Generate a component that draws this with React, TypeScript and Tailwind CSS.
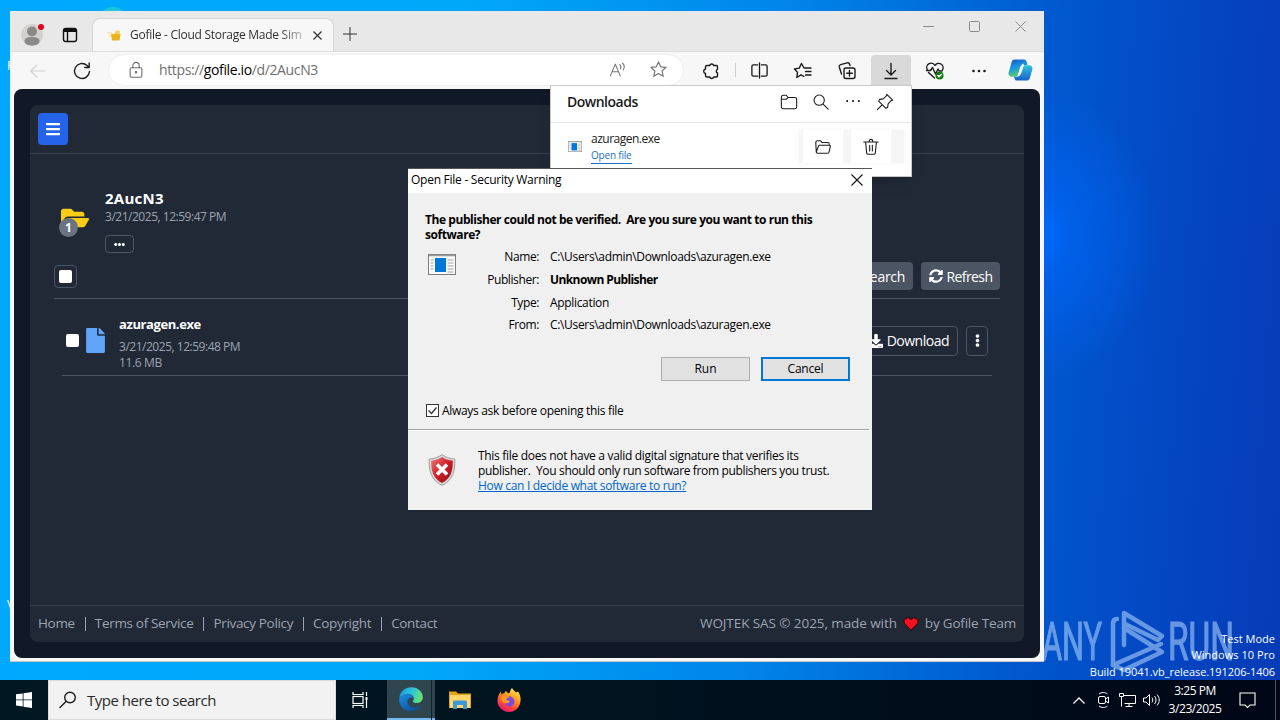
import type { ReactNode } from "react";
import { FaBars, FaFolderOpen, FaFile, FaEllipsisH, FaEllipsisV, FaSyncAlt, FaDownload, FaSearch } from "react-icons/fa";

interface IconProps {
  size?: number;
  stroke?: string;
  width?: number;
  className?: string;
  children: ReactNode;
}

function Icon({ size = 20, stroke = "#1b1b1b", width = 1.2, className = "", children }: IconProps) {
  return (
    <svg
      width={size}
      height={size}
      viewBox="0 0 20 20"
      fill="none"
      stroke={stroke}
      strokeWidth={width}
      strokeLinecap="round"
      strokeLinejoin="round"
      className={`shrink-0 ${className}`}
    >
      {children}
    </svg>
  );
}

function ExeIcon({ className }: { className: string }) {
  return (
    <svg viewBox="0 0 28 21" className={className} preserveAspectRatio="none">
      <rect x="0.5" y="0.5" width="27" height="20" fill="#fafafa" stroke="#7d7d7d" />
      <path d="M1 1.5h26" stroke="#9a9a9a" strokeWidth="1.5" />
      <path d="M2.5 6h3M2.5 9h3M2.5 12h3M2.5 15h3M19.5 6h6M19.5 9h6M19.5 12h6M19.5 15h6M19.5 18h6" stroke="#a3a3a3" />
      <rect x="7" y="4" width="11" height="14" fill="#0078d7" />
    </svg>
  );
}

function TabStrip() {
  return (
    <div className="flex h-[40px] shrink-0 bg-[#e8e8e8]">
      <div className="flex w-[82px] items-center pt-2 pl-[11px]">
        <svg width="26" height="26" viewBox="0 0 26 26" className="shrink-0">
          <circle cx="11" cy="13" r="11" fill="#d4d2d0" />
          <circle cx="11" cy="9.5" r="5" fill="#8c8a88" />
          <path d="M3.5 19c0-3 3-4 7.5-4s7.5 1 7.5 4-3.5 4.5-7.5 4.5-7.5-1.5-7.5-4.5z" fill="#8c8a88" />
          <circle cx="20" cy="5" r="3" fill="#e3001b" />
        </svg>
        <svg width="16" height="16" viewBox="0 0 16 16" fill="none" stroke="#111" strokeWidth="1.4" className="ml-[15px] shrink-0">
          <rect x="1.5" y="1.5" width="13" height="13" rx="2.2" />
          <path d="M1.5 3.5h13" strokeWidth="3" />
          <path d="M5.5 5v9" />
        </svg>
      </div>
      <div className="mt-[7px] flex w-[242px] items-center rounded-t-lg border border-b-0 border-[#d4d4d4] bg-[#f7f7f7] pl-[14px]">
        <svg width="16" height="14" viewBox="0 0 16 14" className="shrink-0">
          <path d="M0 5h5M1.5 8h3" stroke="#f3d98b" strokeWidth="1.2" />
          <path d="M4 6h9.500l-1 6.500H5z" fill="#e9b21f" />
          <path d="M7 6l2-3.500 4 .5-.5 3z" fill="#f7cf5a" />
        </svg>
        <span className="ml-[7px] w-[174px] overflow-hidden bg-linear-to-r from-[#2b2b2b] from-85% to-[#c8c8c8] bg-clip-text text-[12px] tracking-[-0.27px] whitespace-nowrap text-transparent">
          Gofile - Cloud Storage Made Sim
        </span>
        <svg width="9" height="9" viewBox="0 0 9 9" stroke="#333" strokeWidth="1.2" className="ml-[9px] shrink-0">
          <path d="M0.5 0.5l8 8M8.5 0.5l-8 8" />
        </svg>
      </div>
      <svg width="14" height="14" viewBox="0 0 14 14" stroke="#333" className="mt-[16px] ml-[9px] shrink-0">
        <path d="M7 0v14M0 7h14" />
      </svg>
      <div className="ml-auto flex gap-[35px] pt-[10px] pr-[18px]">
        <svg width="11" height="11" viewBox="0 0 11 11" stroke="#8b8b8b">
          <path d="M0 5.5h11" />
        </svg>
        <svg width="11" height="11" viewBox="0 0 11 11" stroke="#8b8b8b" fill="none">
          <rect x="0.5" y="0.5" width="10" height="10" rx="1" />
        </svg>
        <svg width="11" height="11" viewBox="0 0 11 11" stroke="#8b8b8b">
          <path d="M0.5 0.5l10 10M10.5 0.5l-10 10" />
        </svg>
      </div>
    </div>
  );
}

function Slot({ children }: { children: ReactNode }) {
  return <div className="flex w-[44px] shrink-0 items-center justify-center">{children}</div>;
}

function Toolbar() {
  return (
    <div className="flex h-[38px] shrink-0 border-t border-[#dedede] bg-[#f7f7f7] pl-[6px]">
      <Slot>
        <Icon size={18} stroke="#cfcfcf">
          <path d="M18 10H2M9 3L2 10l7 7" />
        </Icon>
      </Slot>
      <Slot>
        <Icon width={1.4}>
          <path d="M17.5 10.5A7.5 7.5 0 1 1 14.8 4.2L17 6.300M17.200 2v4.500h-4.500" />
        </Icon>
      </Slot>
      <div className="mt-[2px] ml-[4px] flex h-[32px] w-[576px] shrink-0 items-center rounded-full border border-[#f0f0f0] bg-white pb-px pl-[18px]">
        <Icon size={18} stroke="#6b6b6b">
          <rect x="3.500" y="7.500" width="13" height="10.500" rx="1.500" />
          <path d="M6.500 7.500V5a3.500 3.500 0 0 1 7 0v2.500" />
          <circle cx="10" cy="12.500" r="0.800" fill="#6b6b6b" />
        </Icon>
        <span className="ml-[14px] text-[14px] tracking-[-0.370px] text-[#6e6e6e]">
          https://<span className="text-black">gofile.io</span>/d/2AucN3
        </span>
        <Icon size={18} stroke="#767676" className="ml-auto">
          <path d="M1.500 16.500L7 3.500l5.500 13M3.500 12h7M12 4c1.500 1.200 1.500 3 .8 4.500M15 2.500c2.300 2 2.300 5 .8 7.500" />
        </Icon>
        <Icon size={19} stroke="#767676" className="mr-[15px] ml-[22px]">
          <path d="M10 2l2.400 5.200 5.600.6-4.200 3.800 1.200 5.600-5-2.900-5 2.900 1.200-5.600L2 7.800l5.600-.6z" />
        </Icon>
      </div>
      <div className="ml-[5px] flex">
        <Slot>
          <Icon width={1.4}>
            <path d="M6 4.500h2.800a2 2 0 0 1 3.900 0H15.500a1 1 0 0 1 1 1v2.800a2 2 0 0 0 0 3.700v3a1 1 0 0 1-1 1h-2.800a2 2 0 0 1-3.900 0H6a1.500 1.500 0 0 1-1.500-1.500v-2a2.300 2.300 0 0 1 0-4.500V6A1.500 1.500 0 0 1 6 4.500z" />
          </Icon>
        </Slot>
        <div className="mt-[11px] ml-[2px] h-[14px] w-px shrink-0 bg-[#cfcfcf]" />
        <div className="ml-px flex">
          <Slot>
            <Icon width={1.4} size={19}>
              <path d="M8 4H3.500A1.500 1.500 0 0 0 2 5.500v9A1.500 1.500 0 0 0 3.500 16H8M12 4h4.500A1.500 1.500 0 0 1 18 5.500v9a1.500 1.500 0 0 1-1.500 1.500H12M10 2v16" />
            </Icon>
          </Slot>
          <Slot>
            <Icon width={1.4}>
              <path d="M11 15.500L8 13.800l-4.200 2.700.7-5.100L1.500 8l4.700-.9L8.500 2.500 11 7h7M12.500 10.500h5.500M12.500 14h5.500" />
            </Icon>
          </Slot>
          <Slot>
            <Icon width={1.4}>
              <rect x="7" y="7" width="11" height="10.500" rx="2" />
              <path d="M12.500 9.500v5.500M9.800 12.300h5.500M4.500 13L2.300 6a2 2 0 0 1 1.300-2.300l6.500-1.900a2 2 0 0 1 2.400 1.200l.5 1.500" />
            </Icon>
          </Slot>
          <div className="ml-[2px] flex h-[31px] w-[40px] shrink-0 translate-y-[3px] items-center justify-center rounded-t bg-[#d9d9d9]">
            <Icon width={1.4}>
              <path d="M10 2.500v11M5.500 9.500L10 14l4.500-4.500M4 17.500h12" />
            </Icon>
          </div>
          <div className="ml-[2px] flex">
            <Slot>
              <Icon width={1.4}>
                <path d="M9.500 17L3.500 11.500M2.200 8.500A4.200 4.200 0 0 1 10 4.500a4.200 4.200 0 0 1 7.500 4.500M1.500 9.500h4l2-3 3 6.500 2.500-5 1.200 2H17" />
                <circle cx="14.500" cy="14.500" r="4" fill="#0f7b0f" stroke="none" />
                <path d="M12.800 14.500l1.300 1.300 2.200-2.300" stroke="#fff" />
              </Icon>
            </Slot>
            <Slot>
              <Icon>
                <path d="M4.500 10h.01M10 10h.01M15.500 10h.01" strokeWidth="2.600" />
              </Icon>
            </Slot>
          </div>
        </div>
        <svg width="25" height="24" viewBox="0 0 26 24" className="mt-[6px] ml-[7px] shrink-0">
          <defs>
            <linearGradient id="copLeft" x1="0" y1="0" x2="0.3" y2="1">
              <stop offset="0" stopColor="#1556c9" />
              <stop offset="0.55" stopColor="#1d9be0" />
              <stop offset="1" stopColor="#53cf6a" />
            </linearGradient>
            <linearGradient id="copRight" x1="0.5" y1="0" x2="0.5" y2="1">
              <stop offset="0" stopColor="#35c5dc" />
              <stop offset="1" stopColor="#1a5fd0" />
            </linearGradient>
          </defs>
          <path d="M7 1h9.500c2 0 2.500 1.500 3 3l.8 3H16c-2 0-3 1-3.600 3l-2 7c-.5 1.500-1.500 2-3 2H4c-2.500 0-4-2-3.300-4.500l3-10.500C4.200 2 5 1 7 1z" fill="url(#copLeft)" />
          <path d="M19 23H9.500c-2 0-2.600-1.500-3-3l-.3-1H9c2 0 3-1 3.600-3l2-7c.5-1.500 1.500-2 3-2H22c2.500 0 4 2 3.300 4.500l-2.500 8.500C22.300 22 21 23 19 23z" fill="url(#copRight)" />
          <path d="M10.500 17c1.800-.5 2.200-2 2.700-4l1.200-4c.4-1.300 1-2 2-2.500" stroke="#f3fdff" strokeWidth="2.600" fill="none" />
        </svg>
      </div>
    </div>
  );
}

const footerLinks = ["Home", "Terms of Service", "Privacy Policy", "Copyright", "Contact"];

function GofilePage() {
  return (
    <div className="mx-[4px] mb-[3px] flex flex-1 flex-col rounded-lg bg-[#111827] p-4">
      <div className="flex flex-1 flex-col rounded-lg bg-[#212937] text-[#9ca3af]">
        <header className="h-[49px] shrink-0 border-b border-[#374151] pt-2 pl-2">
          <div className="flex h-8 w-[30px] items-center justify-center rounded bg-[#2563eb] text-white">
            <FaBars size={16} />
          </div>
        </header>

        <main className="flex-1 pr-6 pl-6">
          <div className="flex pt-[34px]">
            <div className="relative ml-[7px] h-[54px] w-[44px] pt-[16px]">
              <FaFolderOpen size={28} className="text-[#facc15]" />
              <span className="absolute top-[30px] left-[-2px] flex size-[19px] items-center justify-center rounded-full bg-[#6b7280] text-[12px] font-bold text-white">
                1
              </span>
            </div>
            <div>
              <h1 className="text-[15px] leading-5 font-bold tracking-[0.25px] text-white">2AucN3</h1>
              <p className="text-[12px] leading-[18px] tracking-[-0.480px]">3/21/2025, 12:59:47 PM</p>
              <div className="mt-[9px] flex h-[18px] w-[29px] items-center justify-center rounded border border-[#4b5563] text-white">
                <FaEllipsisH size={11} />
              </div>
            </div>
          </div>

          <div className="mt-[9px] flex h-[37px] border-b border-[#4b5563]">
            <div className="mt-[3px] flex size-[23px] items-center justify-center rounded border border-[#4b5563]">
              <div className="size-[13px] rounded-[2px] bg-white" />
            </div>
            <div className="ml-auto flex h-7 gap-2 text-[14px] text-white">
              <div className="flex items-center gap-1 rounded bg-[#4b5563] px-2">
                <FaSearch size={14} />
                <span className="tracking-[-0.300px]">Search</span>
              </div>
              <div className="flex w-[79px] items-center justify-center gap-1 rounded bg-[#4b5563]">
                <FaSyncAlt size={14} className="shrink-0" />
                <span className="tracking-[-0.600px]">Refresh</span>
              </div>
            </div>
          </div>

          <div className="mx-2 flex h-[77px] items-center border-b border-[#4b5563] pt-[7px]">
            <div className="ml-1 size-[13px] rounded-[2px] bg-white" />
            <FaFile size={25} className="ml-[4px] text-[#60a5fa]" />
            <div className="ml-[11px]">
              <p className="-mt-px text-[13px] leading-5 font-bold tracking-[-0.400px] text-white">azuragen.exe</p>
              <p className="pt-[5px] text-[12px] leading-4 tracking-[-0.480px]">3/21/2025, 12:59:48 PM</p>
              <p className="-mb-[4px] text-[12px] leading-4 tracking-[-0.350px]">11.6 MB</p>
            </div>
            <div className="ml-auto flex h-[30px] gap-2 pr-1 text-[14px] text-white">
              <div className="flex items-center gap-1 rounded border border-[#4b5563] px-2">
                <FaDownload size={14} />
                <span className="tracking-[-0.500px]">Download</span>
              </div>
              <div className="flex w-[22px] items-center justify-center rounded border border-[#4b5563]">
                <FaEllipsisV size={13} />
              </div>
            </div>
          </div>
        </main>

        <footer className="flex h-[37px] shrink-0 items-center justify-between border-t border-[#374151] px-2 pb-px text-[13.5px]">
          <div className="flex items-center">
            {footerLinks.map((link, i) => (
              <div key={link} className="flex items-center">
                {i > 0 && <span className="mr-[9px] ml-[10px] h-[14px] w-px bg-[#9ca3af]" />}
                <span className="tracking-[-0.330px] whitespace-nowrap">{link}</span>
              </div>
            ))}
          </div>
          <div className="flex items-center gap-[6px] whitespace-nowrap">
            <span className="tracking-[-0.080px]">WOJTEK SAS © 2025, made with</span>
            <svg width="16" height="14" viewBox="0 0 16 14">
              <path d="M8 13.200L1.600 6.800A3.600 3.600 0 0 1 8 2.600a3.600 3.600 0 0 1 6.400 4.200z" fill="#f1121f" stroke="#300" />
            </svg>
            <span className="tracking-[-0.200px]">by Gofile Team</span>
          </div>
        </footer>
      </div>
    </div>
  );
}

function DownloadsPanel() {
  return (
    <div className="absolute top-[85px] left-[550px] h-[92px] w-[362px] border border-[#c9c9c9] bg-white shadow-lg">
      <div className="flex h-[37px] items-center border-b border-[#e5e5e5] pr-[17px] pl-[16px]">
        <span className="pb-[5px] text-[14px] font-semibold tracking-[-0.500px] text-[#1b1b1b]">Downloads</span>
        <div className="ml-auto flex gap-[14px] pb-[5px]">
          <Icon size={18}>
            <path d="M1.500 15.500v-11a2 2 0 0 1 2-2H7l2 2.500h7.500a2 2 0 0 1 2 2v8.500a2 2 0 0 1-2 2h-13a2 2 0 0 1-2-2zM1.500 7H7l2-2" />
          </Icon>
          <Icon size={18}>
            <circle cx="8" cy="8" r="5.700" />
            <path d="M12.300 12.300L18 18" />
          </Icon>
          <Icon size={18}>
            <path d="M3.500 9h.01M10 9h.01M16.500 9h.01" strokeWidth="2.300" />
          </Icon>
          <Icon size={18}>
            <path d="M12 1.500L18.500 8l-2 .7-3 3.300-.6 4-1.900 1L3 9l1-1.900 4-.6 3.300-3zM6.500 13.500L1.500 18.500" />
          </Icon>
        </div>
      </div>
      <div className="flex pl-[17px]">
        <ExeIcon className="mt-[18px] h-[11px] w-[14px]" />
        <div className="ml-[9px] pt-[8px]">
          <p className="text-[12px] leading-4 tracking-[-0.500px] text-[#1b1b1b]">azuragen.exe</p>
          <span className="block w-[41px] border-b border-[#1a6fc4] pt-px text-[10px] leading-[15px] tracking-[-0.200px] whitespace-nowrap text-[#1a6fc4]">Open file</span>
        </div>
        <div className="mt-[7px] mr-[7px] ml-auto flex h-[33px] gap-[8px] bg-[#f5f5f5] pr-[13px] pl-[4px] shadow-[0_0_6px_#f5f5f5]">
          <div className="flex w-[40px] items-center justify-center bg-white">
            <Icon size={18}>
              <path d="M2.500 15.500L2 5a2 2 0 0 1 2-2h3l2 2h6a2 2 0 0 1 2 2v1M2.500 15.500L5 9a1.500 1.500 0 0 1 1.500-1h10.700a1 1 0 0 1 1 1.300L16.600 16a1.500 1.500 0 0 1-1.500 1H4a1.600 1.600 0 0 1-1.500-1.500z" />
            </Icon>
          </div>
          <div className="flex w-[40px] items-center justify-center bg-white">
            <Icon size={18}>
              <path d="M2 4.500h16M8 4.500V3.500a2 2 0 0 1 4 0v1M4 4.500l1.200 12.300A1.500 1.500 0 0 0 6.700 18h6.600a1.500 1.500 0 0 0 1.500-1.200L16 4.500M8.500 8v6.500M11.500 8v6.500" />
            </Icon>
          </div>
        </div>
      </div>
    </div>
  );
}

const fileInfo = [
  { label: "Name:", value: "C:\\Users\\admin\\Downloads\\azuragen.exe" },
  { label: "Publisher:", value: "Unknown Publisher", bold: true },
  { label: "Type:", value: "Application" },
  { label: "From:", value: "C:\\Users\\admin\\Downloads\\azuragen.exe" },
];

function SecurityDialog() {
  return (
    <div className="absolute top-[168px] left-[408px] flex h-[342px] w-[464px] flex-col bg-[#f0f0f0] text-[12px] text-black">
      <div className="flex h-[25px] shrink-0 items-center justify-between border-t border-[#555] bg-white pr-[9px] pb-[2px] pl-[3px]">
        <span className="tracking-[-0.260px]">Open File - Security Warning</span>
        <svg width="12" height="12" viewBox="0 0 12 12" stroke="#111" strokeWidth="1.1">
          <path d="M0.5 0.5l11 11M11.5 0.5l-11 11" />
        </svg>
      </div>
      <p className="mt-[19px] pl-[17px] leading-[15px] font-bold tracking-[-0.440px] whitespace-pre">
        {"The publisher could not be verified.  Are you sure you want to run this\nsoftware?"}
      </p>
      <div className="mt-[4px] flex">
        <ExeIcon className="mt-[8px] ml-[20px] h-[21px] w-[28px]" />
        <div>
          {fileInfo.map((row) => (
            <div key={row.label} className="flex h-[22.660px] items-center">
              <span className="w-[83px] text-right tracking-[-0.400px]">{row.label}</span>
              <span className={`ml-[11px] ${row.bold ? "font-bold tracking-[-0.600px]" : "tracking-[-0.330px]"}`}>{row.value}</span>
            </div>
          ))}
        </div>
      </div>
      <div className="mt-[20px] flex h-[24px] justify-end gap-[11px] pr-[22px]">
        <button className="w-[89px] border border-[#adadad] bg-[#e1e1e1]">Run</button>
        <button className="w-[89px] border-2 border-[#0078d7] bg-[#e1e1e1] tracking-[-0.200px]">Cancel</button>
      </div>
      <div className="mt-[21px] flex h-[18px] items-center pl-[18px]">
        <svg width="13" height="13" viewBox="0 0 13 13" fill="none" stroke="#333">
          <rect x="0.5" y="0.5" width="12" height="12" fill="#fff" />
          <path d="M2.5 6.5l3 3 5-6" strokeWidth="1.3" />
        </svg>
        <span className="ml-[3px] tracking-[-0.310px]">Always ask before opening this file</span>
      </div>
      <div className="mt-[9px] mr-[3px] h-[2px] border-t border-[#a0a0a0] bg-white" />
      <div className="flex pt-[17px] pl-[20px]">
        <svg width="28" height="32" viewBox="0 0 28 32" className="mt-[6px] shrink-0">
          <defs>
            <linearGradient id="shield" x1="0" y1="0" x2="1" y2="1">
              <stop offset="0" stopColor="#f0797b" />
              <stop offset="0.5" stopColor="#cf1c25" />
              <stop offset="1" stopColor="#8f0d14" />
            </linearGradient>
          </defs>
          <path d="M14 .7c3.500 2.600 7.500 4 12.800 4.300.5 11-1.800 21.500-12.800 26.300C3 26.500.7 16 1.200 5 6.500 4.700 10.500 3.300 14 .7z" fill="#d9d9d9" stroke="#8b8b8b" strokeWidth="0.8" />
          <path d="M14 3c3.200 2.200 6.500 3.400 10.800 3.800.2 9.700-2 18-10.800 22.200C5.200 24.800 3 16.500 3.200 6.800 7.500 6.400 10.800 5.200 14 3z" fill="url(#shield)" />
          <path d="M9 10.500l10 10M19 10.500l-10 10" stroke="#fff" strokeWidth="3.6" />
        </svg>
        <div className="ml-[22px] leading-[15px] whitespace-pre">
          <p className="tracking-[-0.310px]">This file does not have a valid digital signature that verifies its</p>
          <p className="tracking-[-0.350px]">{"publisher.  You should only run software from publishers you trust."}</p>
          <p className="tracking-[-0.310px] text-[#0066cc] underline">How can I decide what software to run?</p>
        </div>
      </div>
    </div>
  );
}

function Watermark() {
  return (
    <svg width="240" height="74" viewBox="0 0 240 74" className="absolute right-0 bottom-0" fill="#9cc3f5" opacity="0.65">
      <g stroke="#9cc3f5" strokeWidth="1.2" fontFamily="Roboto" fontSize="53">
        <text x="2" y="54" textLength="60" lengthAdjust="spacingAndGlyphs">ANY</text>
        <text x="128" y="54" textLength="66" lengthAdjust="spacingAndGlyphs">RUN</text>
      </g>
      <g fill="none" stroke="#9cc3f5" strokeWidth="4.5" strokeLinejoin="round" strokeLinecap="round">
        <path d="M77 13q-4 0-4 5v41L121 38" />
        <path d="M84 39V7L122 30 118 34 85 18" />
        <path d="M84 22L122 46 84 64 73 59" />
      </g>
    </svg>
  );
}

function Taskbar() {
  return (
    <div className="flex h-[40px] bg-linear-to-r from-[#001822] via-[#00131f] to-[#000716] text-white">
      <div className="flex w-[48px] items-center justify-center">
        <svg width="16" height="16" viewBox="0 0 16 16" fill="#fff">
          <path d="M0 2.300l6.700-.9v6.100H0zM7.500 1.300L16 0v7.500H7.500zM0 8.300h6.700v6.100L0 13.500zM7.500 8.300H16V16l-8.500-1.300z" />
        </svg>
      </div>
      <div className="flex w-[288px] items-center border border-[#dcdcdc] bg-[#f2f2f2] pl-[9px] text-[#2a2a2a]">
        <Icon size={20} width={1.4}>
          <circle cx="12" cy="7.500" r="5.300" />
          <path d="M8 11.500L2 17.500" />
        </Icon>
        <span className="ml-[9px] text-[15px] tracking-[-0.480px]">Type here to search</span>
      </div>
      <div className="flex w-[51px] items-center justify-center pr-[3px]">
        <svg width="16" height="16" viewBox="0 0 16 16" fill="none" stroke="#fff" strokeWidth="1.2">
          <path d="M1 0v2.500h10V0M1 16v-2.500h10V16" />
          <rect x="1" y="4.500" width="10" height="7" />
          <path d="M14.500 0v4M14.500 8v8" />
          <rect x="13.500" y="5" width="2" height="3" fill="#fff" stroke="none" />
        </svg>
      </div>
      <div className="relative flex w-[48px] items-center justify-center border-b-2 border-[#76b9ed] bg-[#30464f]">
        <svg width="24" height="24" viewBox="0 0 24 24">
          <defs>
            <linearGradient id="edgeTop" x1="0" y1="0.3" x2="1" y2="0.5">
              <stop offset="0" stopColor="#1a9de0" />
              <stop offset="0.55" stopColor="#2fc7d8" />
              <stop offset="1" stopColor="#6be36b" />
            </linearGradient>
            <linearGradient id="edgeBody" x1="0" y1="0" x2="0.8" y2="1">
              <stop offset="0" stopColor="#1b8fe0" />
              <stop offset="1" stopColor="#0c4f9e" />
            </linearGradient>
          </defs>
          <path d="M.3 11C1 4.500 6 .2 12.300.2 19 .2 23.800 4.800 23.800 10c0 4-3 6-6 6-2.500 0-4-.8-4-1.800 0-.7 1-1 1-2.700 0-2.200-2-4.300-5.300-4.300C5 7.200 1.500 9 .3 11z" fill="url(#edgeTop)" />
          <path d="M.2 12.500C.6 9 4.500 7.200 8.500 7.200c3 0 5.500 1.500 6 3.500-4.500-1.200-7 2-6 5.500 1 3.300 4.500 5 8.500 4.500 2-.3 3.800-1.300 4.700-1.500C19.500 22 16 24 12 24 5 24-.2 18.500.2 12.500z" fill="url(#edgeBody)" />
        </svg>
        <div className="absolute top-0 right-[3px] h-[40px] w-px bg-[#0a2530]" />
      </div>
      <div className="flex w-[49px] items-center justify-center">
        <svg width="22" height="20" viewBox="0 0 22 20">
          <path d="M0 1.500h7l2 2h13V18H0z" fill="#e8a317" />
          <path d="M1 5h20v13H1z" fill="#ffd869" />
          <path d="M4 19v-7a1.500 1.500 0 0 1 1.500-1.500h11A1.500 1.500 0 0 1 18 12v7h-4v-4H8v4z" fill="#3d9ad6" />
        </svg>
      </div>
      <div className="flex w-[49px] items-center justify-center">
        <svg width="24" height="24" viewBox="0 0 24 24">
          <defs>
            <linearGradient id="fox" x1="0.8" y1="0" x2="0.3" y2="1">
              <stop offset="0" stopColor="#fff14f" />
              <stop offset="0.4" stopColor="#ff9a1f" />
              <stop offset="0.75" stopColor="#ff4040" />
              <stop offset="1" stopColor="#e3127c" />
            </linearGradient>
          </defs>
          <path d="M15 0c1 2 3 3 4 4.500l2-1c2 3 3 6 2.500 9.500C23 19.500 18 24 12 24S.5 19 .5 13c0-3.500 1-7 3.500-9.500l.5 3c1-1 2-1.500 3-1.500L9 2.500c.5 2 2 2.500 3 3 1.500-1.500 1-4 3-5.500z" fill="url(#fox)" />
          <circle cx="12.500" cy="13.500" r="5" fill="#7a4be0" />
          <path d="M4.500 9c3-2 6-1 8 .5-2 0-3.500 1-3.500 2.500 1.500-.5 2.500 1 4 1-1 2.500-4 3-6.500 1.500-1.500-1-2.500-3-2-5.500z" fill="#ff9a1f" />
        </svg>
      </div>
      <div className="ml-auto flex items-center">
        <svg width="12" height="7" viewBox="0 0 12 7" fill="none" stroke="#fff" strokeWidth="1.3">
          <path d="M0.5 6.5L6 1l5.500 5.500" />
        </svg>
        <svg width="14" height="18" viewBox="0 0 14 18" fill="none" stroke="#fff" className="ml-[12px]">
          <rect x="1.500" y="5.500" width="7" height="7" rx="1.500" />
          <path d="M8.500 8l3-2v6l-3-2M2 3c2.500-2 6-2 8.500 0M2 15c2.500 2 6 2 8.500 0" />
        </svg>
        <svg width="17" height="14" viewBox="0 0 17 14" fill="none" stroke="#fff" className="ml-[8px]">
          <path d="M5 2.500h11.500v8H5.500M10 10.500v3M6.500 13.500h7M2.500 4v9.500M.5.500h4v3h-4z" />
        </svg>
        <svg width="18" height="14" viewBox="0 0 18 14" fill="none" stroke="#fff" className="ml-[7px]">
          <path d="M0.500 5h2.500l3.500-3.500v11L3 9H.5zM9 4.500c1 1.500 1 3.500 0 5M11.500 3c2 2.500 2 5.500 0 8M14 1.500c3 3.500 3 7.500 0 11" />
        </svg>
        <div className="w-[68px] text-center text-[12px] leading-[18px] tracking-[-0.450px]">
          <p>3:25 PM</p>
          <p>3/23/2025</p>
        </div>
        <svg width="17" height="17" viewBox="0 0 17 17" fill="none" stroke="#fff" strokeWidth="1.1" className="ml-[10px]">
          <path d="M1 1h15v12h-5l-2.500 2.500L6 13H1z" />
        </svg>
        <div className="mr-[4px] ml-[19px] h-[40px] w-px bg-[#4a5566]" />
      </div>
    </div>
  );
}

export default function App() {
  return (
    <div className="flex h-[720px] w-[1280px] flex-col overflow-hidden font-['Open_Sans',sans-serif]">
      <div className="relative h-[680px] overflow-hidden bg-[radial-gradient(ellipse_130px_150px_at_1030px_235px,#006eff_0%,#0062f0cc_30%,transparent_100%),linear-gradient(94deg,#00a8ff_0%,#00a8fa_35%,#0084e8_60%,#0058ce_80%,#0446c2_91%,#063bb6_100%)]">
        <div className="absolute top-[7px] left-[97px] size-[32px] rounded-full bg-[#1cc4dc]" />
        <p className="absolute top-[57px] left-[7px] text-[12px] text-white">F</p>
        <p className="absolute top-[596px] left-[7px] text-[12px] text-white">V</p>
        <Watermark />
        <div className="absolute right-[5px] bottom-0 text-right text-[11px] leading-[17px] text-white">
          <p className="tracking-[0.020px]">Test Mode</p>
          <p className="-mt-px tracking-[0.050px]">Windows 10 Pro</p>
          <p className="tracking-[-0.050px]">Build 19041.vb_release.191206-1406</p>
        </div>
        <div className="absolute top-[11px] left-[10px] flex h-[651px] w-[1034px] flex-col border-b border-[#c5c5c5] bg-[#f7f7f7]">
          <TabStrip />
          <Toolbar />
          <GofilePage />
        </div>
        <DownloadsPanel />
        <SecurityDialog />
      </div>
      <Taskbar />
    </div>
  );
}
